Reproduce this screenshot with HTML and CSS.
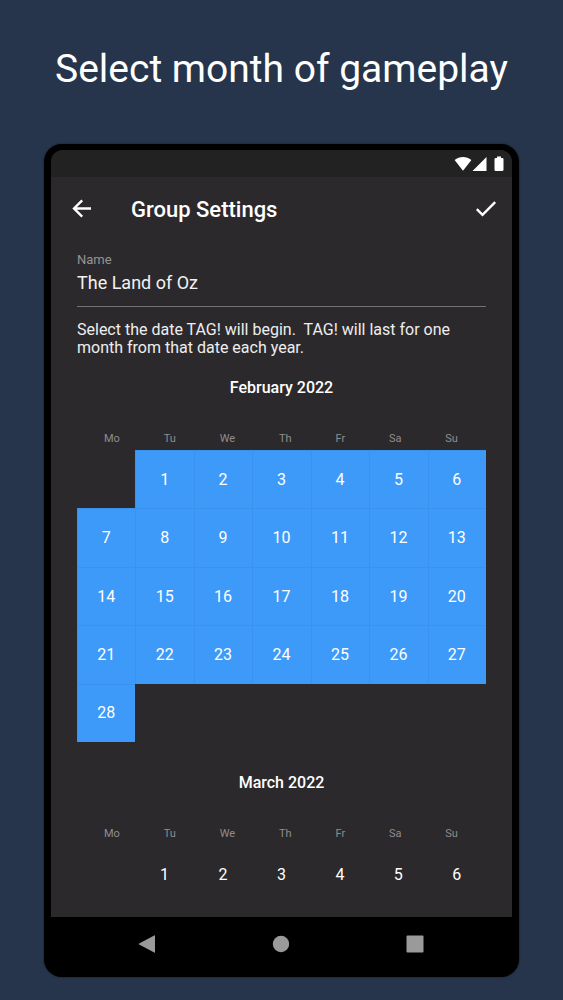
FILE: index.html
```html
<!DOCTYPE html>
<html lang="en">
<head>
  <meta charset="UTF-8">
  <meta name="viewport" content="width=device-width, initial-scale=1">
  <title>Group Settings</title>
  <link rel="stylesheet" href="styles.css">
</head>
<body>

  <h1 class="headline">Select month of gameplay</h1>

  <div class="phone">
    <div class="screen">

      <!-- Status bar -->
      <div class="status-bar">
        <svg width="18" height="16" viewBox="0 0 18 16"><path d="M9 14.800 0.600 4C3 2 6 1 9 1s6 1 8.400 3z"/></svg>
        <svg width="16" height="16" viewBox="0 0 16 16"><path d="M14.500 1v14H0.500z"/></svg>
        <svg class="battery" width="10" height="16" viewBox="0 0 10 16"><path d="M3 0.500h4v1.500h1.200q1.300 0 1.300 1.200v10.600q0 1.200-1.300 1.200H1.800Q0.500 15 0.500 13.800V3.200Q0.500 2 1.800 2H3z"/></svg>
      </div>

      <!-- App bar -->
      <header class="app-bar">
        <button class="icon-btn" type="button" aria-label="Back">
          <svg width="20" height="20" viewBox="0 0 20 20"><path d="M19 9.500H2.500M10.200 1.300 2 9.500l8.200 8.200"/></svg>
        </button>
        <h2 class="app-title">Group Settings</h2>
        <button class="icon-btn" type="button" aria-label="Save">
          <svg width="20" height="20" viewBox="0 0 20 20"><path d="M0.800 10.200 6.500 15.900 19.200 3.200"/></svg>
        </button>
      </header>

      <main class="content">
        <div class="field">
          <label for="groupName">Name</label>
          <input type="text" id="groupName" value="The Land of Oz">
        </div>

        <p class="hint">Select the date TAG! will begin.&nbsp; TAG! will last for one month from that date each year.</p>

        <section class="month">
          <h3>February 2022</h3>
          <div class="weekdays">
            <span>Mo</span><span>Tu</span><span>We</span><span>Th</span><span>Fr</span><span>Sa</span><span>Su</span>
          </div>
          <div class="days selected" id="february"></div>
        </section>

        <section class="month">
          <h3>March 2022</h3>
          <div class="weekdays">
            <span>Mo</span><span>Tu</span><span>We</span><span>Th</span><span>Fr</span><span>Sa</span><span>Su</span>
          </div>
          <div class="days" id="march"></div>
        </section>
      </main>
    </div>

    <!-- Android navigation -->
    <nav class="nav-bar">
      <button type="button" aria-label="Back">
        <svg width="18" height="18" viewBox="0 0 18 18"><path d="M17 0.800v16.400q0 0.800-0.800 0.400L1.200 9.600q-1-0.600 0-1.200L16.200 0.400q0.800-0.400 0.800 0.400z"/></svg>
      </button>
      <button type="button" aria-label="Home">
        <svg width="18" height="18" viewBox="0 0 18 18"><circle cx="9" cy="9" r="8.200"/></svg>
      </button>
      <button type="button" aria-label="Recent apps">
        <svg width="18" height="18" viewBox="0 0 18 18"><rect x="0.500" y="0.500" width="17" height="17" rx="1"/></svg>
      </button>
    </nav>
  </div>

  <script>
    function fillDays(id, count) {
      const grid = document.getElementById(id);
      for (let day = 1; day <= count; day++) {
        const btn = document.createElement('button');
        btn.type = 'button';
        btn.textContent = day;
        grid.appendChild(btn);
      }
    }

    // Both months start on a Tuesday
    fillDays('february', 28);
    fillDays('march', 6);
  </script>

</body>
</html>
```
FILE: styles.css
```css
* {
  box-sizing: border-box;
  margin: 0;
  padding: 0;
}

body {
  font-family: Roboto, sans-serif;
  background-color: #26354b;
  color: #fff;
  padding: 45px 44px 23px;
}

button {
  background: none;
  border: none;
  color: inherit;
  font-family: inherit;
  cursor: pointer;
}

svg {
  display: block;
}

.headline {
  font-size: 39px;
  font-weight: 400;
  line-height: 48px;
  text-align: center;
  white-space: nowrap;
  margin-bottom: 51px;
}

.phone {
  background-color: #000;
  border-radius: 18px;
  padding: 6px 7px 0;
  box-shadow: 0 0 2px #101722;
}

.screen {
  background-color: #2c292c;
  border-radius: 12px 12px 0 0;
  overflow: hidden;
}

/* Status bar */
.status-bar {
  display: flex;
  justify-content: flex-end;
  align-items: center;
  height: 27px;
  padding-right: 8px;
  background-color: #232223;
}

.status-bar svg {
  fill: #fff;
}

.status-bar .battery {
  margin-left: 6px;
}

/* App bar */
.app-bar {
  display: flex;
  align-items: center;
  height: 64px;
  padding: 0 16px 0 21px;
}

.app-title {
  flex: 1;
  margin-left: 39px;
  font-size: 22px;
  font-weight: 500;
}

.icon-btn svg {
  fill: none;
  stroke: #fff;
  stroke-width: 2.4;
}

.content {
  padding: 10px 26px 13px;
}

.field label {
  display: block;
  font-size: 13px;
  line-height: 18px;
  color: #969496;
}

.field input {
  display: block;
  width: 100%;
  height: 38px;
  padding-bottom: 11px;
  border: none;
  border-bottom: 1px solid #737173;
  background: none;
  color: #f2f2f2;
  font-family: inherit;
  font-size: 18px;
  outline: none;
}

.hint {
  margin-top: 14px;
  font-size: 16px;
  line-height: 18px;
  color: #eee;
}

/* Calendar */
.month {
  padding-top: 21px;
}

.month + .month {
  margin-top: 10px;
}

.month h3 {
  font-size: 16px;
  font-weight: 500;
  line-height: 20px;
  text-align: center;
}

.weekdays {
  display: flex;
  justify-content: space-between;
  margin-top: 34px;
  padding: 0 28px 0 27px;
  font-size: 11px;
  line-height: 14px;
  color: #8f8d8f;
}

.days {
  display: grid;
  grid-template-columns: repeat(7, 1fr);
  margin-top: 4px;
}

.days button {
  aspect-ratio: 1;
  font-size: 16px;
}

.days button:first-child {
  grid-column-start: 2;
}

.days.selected button {
  background-color: #3e9af9;
  box-shadow: inset 1px 1px #3a92ef;
}

/* Android navigation */
.nav-bar {
  display: flex;
  justify-content: space-between;
  padding: 18px 88px 24px 87px;
}

.nav-bar svg {
  fill: #9b999b;
}
```
